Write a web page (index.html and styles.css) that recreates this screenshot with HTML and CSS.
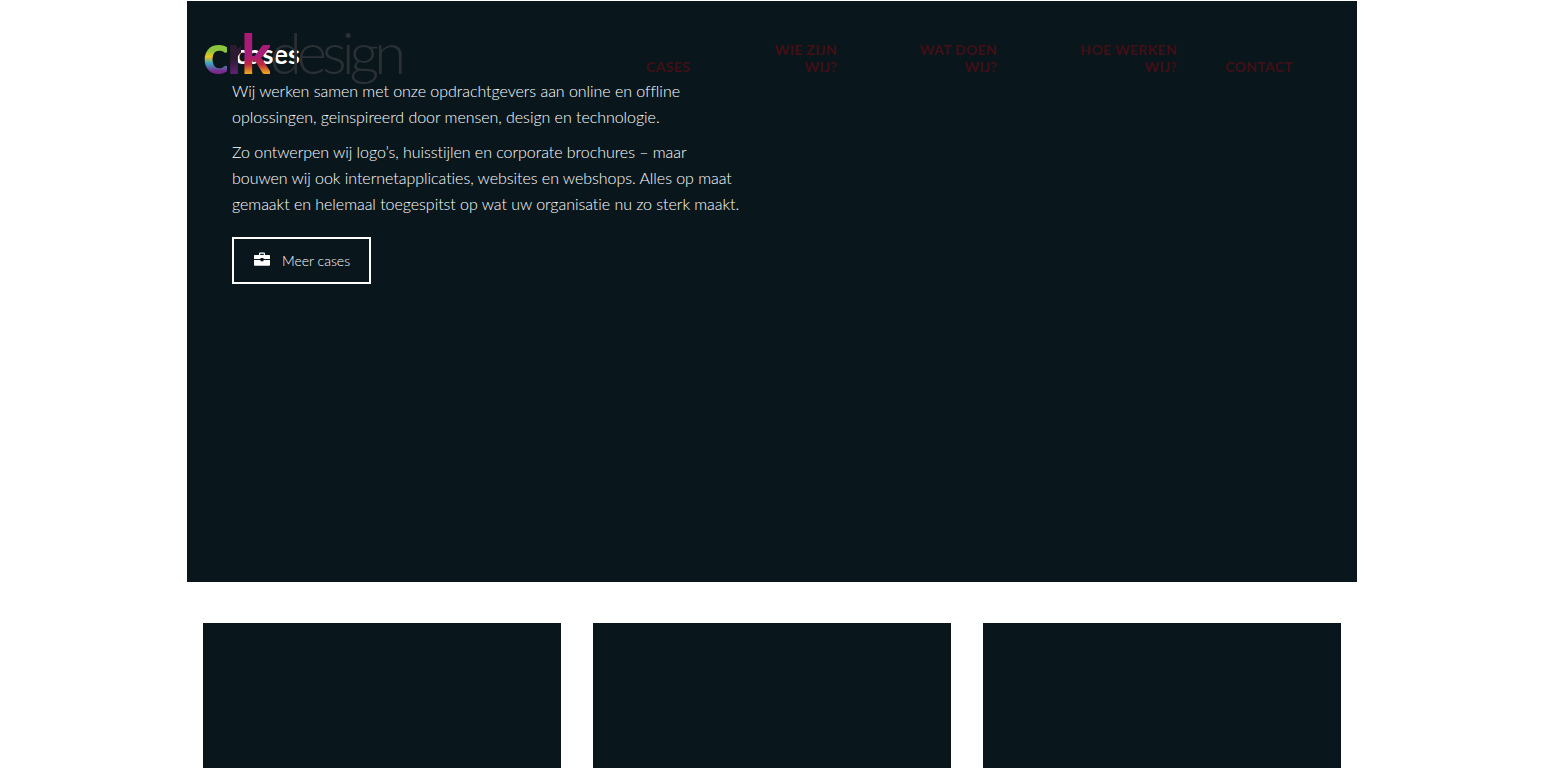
FILE: index.html
```html
<!DOCTYPE html>
<html lang="nl">
<head>
  <meta charset="UTF-8" />
  <meta name="viewport" content="width=device-width, initial-scale=1.0"/>
  <title>CRK Design</title>
  <link rel="stylesheet" href="styles.css">
</head>
<body>
  <div class="hero">
    <header class="site-header">
      <a href="#" class="logo">
        <span class="logo-c">c</span><span class="logo-r">r</span><span class="logo-k">k</span><span class="logo-design">design</span>
      </a>
      <nav class="nav">
        <a href="#" class="nav-cases">Cases</a>
        <a href="#" class="nav-wie">Wie zijn wij?</a>
        <a href="#" class="nav-wat">Wat doen wij?</a>
        <a href="#" class="nav-hoe">Hoe werken wij?</a>
        <a href="#" class="nav-contact">Contact</a>
      </nav>
    </header>

    <div class="hero-text">
      <h2>cases</h2>
      <p>Wij werken samen met onze opdrachtgevers aan online en offline oplossingen, geinspireerd door mensen, design en technologie.</p>
      <p>Zo ontwerpen wij logo’s, huisstijlen en corporate brochures – maar bouwen wij ook internetapplicaties, websites en webshops. Alles op maat gemaakt en helemaal toegespitst op wat uw organisatie nu zo sterk maakt.</p>
      <a href="#" class="btn">
        <svg class="btn-icon" viewBox="0 0 16 14" aria-hidden="true">
          <path d="M5 3V1.600C5 .9 5.500.5 6.200.5h3.600c.7 0 1.200.4 1.200 1.100V3H9.800V1.700H6.200V3z"/>
          <path d="M0 3.600C0 3.200.4 3 .8 3h14.400c.4 0 .8.2.8.6V7H9.500V6h-3v1H0z"/>
          <path d="M0 8h6.500v1.200h3V8H16v5c0 .5-.4.8-.8.8H.8C.4 13.800 0 13.500 0 13z"/>
        </svg>
        Meer cases
      </a>
    </div>
  </div>

  <div class="card-grid">
    <div class="card"></div>
    <div class="card"></div>
    <div class="card"></div>
  </div>
</body>
</html>
```
FILE: styles.css
```css
html, body {
  height: 768px;
  overflow: hidden;
}

body {
  margin: 0;
  background-color: #fff;
  font-family: Lato, "Liberation Sans", sans-serif;
  font-weight: 300;
  color: #fff;
}

.hero {
  position: relative;
  width: 1170px;
  height: 581px;
  margin: 1px auto 0 auto;
  background-color: #09161c;
}

/* header ligt over de tekst heen */
.site-header {
  position: absolute;
  top: 0;
  left: 0;
  right: 0;
  z-index: 5;
}

.logo {
  position: absolute;
  left: 16px;
  top: 16px;
  display: block;
  white-space: nowrap;
  text-decoration: none;
  line-height: 70px;
}

.logo-c, .logo-r, .logo-k {
  font-size: 56px;
  font-weight: 900;
  -webkit-background-clip: text;
  background-clip: text;
  color: transparent;
}

.logo-c {
  letter-spacing: -3px;
  background-image: linear-gradient(to bottom, #8cc63f 0 48%, #f0c419 56%, #3aa6c8 66%, #7a2a8c 78%);
}

.logo-r {
  letter-spacing: -7px;
  background-image: linear-gradient(to bottom, #2c1a30 0 60%, #5c2270 80%);
}

.logo-k {
  letter-spacing: -2px;
  background-image: linear-gradient(to bottom, #a81c78 0 55%, #c0283c 68%, #e8a020 80%);
}

.logo-design {
  font-size: 58px;
  font-weight: 300;
  letter-spacing: -5px;
  color: #2a3034;
}

.nav a {
  position: absolute;
  font-size: 14px;
  font-weight: 700;
  line-height: 17px;
  letter-spacing: 0.3px;
  text-align: right;
  text-transform: uppercase;
  text-decoration: none;
  color: #420f15;
}

.nav-cases { right: 667px; top: 57px; }
.nav-wie { right: 520px; top: 40px; width: 90px; }
.nav-wat { right: 360px; top: 40px; width: 90px; }
.nav-hoe { right: 180px; top: 40px; width: 110px; }
.nav-contact { right: 64px; top: 57px; }

.hero-text {
  width: 512px;
  padding-left: 45px;
}

.hero-text h2 {
  margin: 0 0 9px 3px;
  padding-top: 38px;
  font-size: 27px;
  font-weight: 700;
  line-height: 30px;
}

.hero-text p {
  margin: 0 0 9px 0;
  font-size: 16px;
  line-height: 26px;
  letter-spacing: -0.04px;
}

.btn {
  display: inline-flex;
  align-items: center;
  gap: 12px;
  height: 43px;
  margin-top: 11px;
  padding: 0 19px 0 20px;
  border: 2px solid #fff;
  font-size: 14px;
  color: #fff;
  text-decoration: none;
}

.btn-icon {
  width: 16px;
  height: 14px;
  margin-top: -3px;
  fill: #fff;
}

.card-grid {
  display: grid;
  grid-template-columns: repeat(3, 358px);
  gap: 32px;
  justify-content: center;
  margin-top: 41px;
}

.card {
  height: 300px;
  background-color: #09161c;
}
```
